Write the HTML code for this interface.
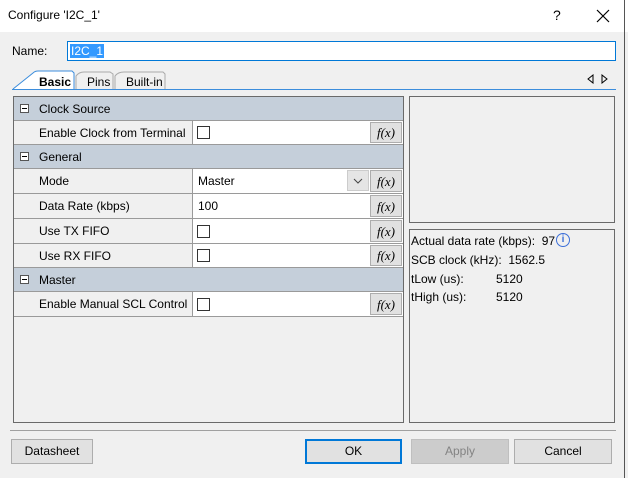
<!DOCTYPE html>
<html><head><meta charset="utf-8"><style>
*{box-sizing:border-box;margin:0;padding:0}
body{width:628px;height:478px;overflow:hidden;background:#f0f0f0;font-family:"Liberation Sans",sans-serif;font-size:12px;color:#000;position:relative}
.a{position:absolute}
.hdr{background:#c5cfda}
.lbl{position:absolute;left:25px;line-height:24px;font-size:12px}
.val{position:absolute;left:178px;right:0;background:#fff;border-left:1px solid #9a9a9a}
.cb{position:absolute;width:13px;height:13px;border:1px solid #333;background:#fff}
.fx{position:absolute;right:1px;width:32px;background:#e1e1e1;border:1px solid #adadad;font-style:italic;text-align:center;font-family:"Liberation Serif",serif;font-size:13px}
.line{position:absolute;left:0;right:0;height:1px;background:#9a9a9a}
.pm{position:absolute;left:6px;width:9px;height:9px;border:1px solid #555;background:#fff}
.pm:after{content:"";position:absolute;left:1px;top:3px;width:5px;height:1px;background:#000}
.btn{position:absolute;top:439px;height:25px;border:1px solid #adadad;background:#e1e1e1;text-align:center;line-height:23px}
</style></head><body>
<div class="a" style="left:0;top:0;width:628px;height:32px;background:#fff"></div>
<div class="a" style="left:8px;top:8px;font-size:12px">Configure 'I2C_1'</div>
<div class="a" style="left:553px;top:7px;font-size:14px">?</div>
<svg class="a" style="left:596px;top:9px" width="14" height="14"><path d="M1 1L13 13M13 1L1 13" stroke="#000" stroke-width="1.2"/></svg>
<div class="a" style="left:624px;top:0;width:1px;height:478px;background:#555"></div>

<div class="a" style="left:12px;top:44px">Name:</div>
<div class="a" style="left:67px;top:41px;width:549px;height:20px;border:1px solid #0078d7;background:#fff"></div>
<div class="a" style="left:70px;top:44px;height:14px;background:#3399ff;color:#fff;padding:0 1px;line-height:14px">I2C_1</div>

<svg class="a" style="left:12px;top:70px" width="160" height="21">
<path d="M103 19 L103 6 Q106 2 112 2 L151 2 L153 4 L153 19" fill="#f0f0f0" stroke="#aaa"/>
<path d="M64 19 L64 6 Q67 2 72 2 L98 2 L101 4 L101 19" fill="#f0f0f0" stroke="#aaa"/>
<path d="M1 19 L21 3 Q23 1 26 1 L60 1 L62 3 L62 19" fill="#fff" stroke="#3c8ddc"/>
</svg>
<div class="a" style="left:39px;top:75px;font-weight:bold">Basic</div>
<div class="a" style="left:87px;top:75px">Pins</div>
<div class="a" style="left:126px;top:75px">Built-in</div>
<div class="a" style="left:12px;top:89px;width:604px;height:1px;background:#3c8ddc"></div>
<svg class="a" style="left:587px;top:74px" width="22" height="10"><path d="M6 1L1 5L6 9Z M15 1L20 5L15 9Z" fill="none" stroke="#000"/></svg>

<div class="a" style="left:13px;top:96px;width:391px;height:327px;border:1px solid #6a6a6a;background:#f0f0f0">
 <div class="a hdr" style="left:0;right:0;top:0;height:24px"></div><div class="pm" style="top:7px"></div><div class="lbl" style="top:0">Clock Source</div>
 <div class="line" style="top:23px"></div>
 <div class="lbl" style="top:24px">Enable Clock from Terminal</div>
 <div class="val" style="top:24px;height:23px"><div class="cb" style="left:4px;top:5px"></div><div class="fx" style="top:1px;height:21px;line-height:20px">f(x)</div></div>
 <div class="line" style="top:47px"></div>
 <div class="a hdr" style="left:0;right:0;top:48px;height:23px"></div><div class="pm" style="top:55px"></div><div class="lbl" style="top:48px">General</div>
 <div class="line" style="top:71px"></div>
 <div class="lbl" style="top:72px">Mode</div>
 <div class="val" style="top:72px;height:24px"><div class="a" style="left:5px;top:5px">Master</div><div class="a" style="right:34px;top:1px;width:22px;height:21px;background:#e5e5e5;border:1px solid #ccc"><svg width="20" height="19"><path d="M6 8L10 12L14 8" fill="none" stroke="#444"/></svg></div><div class="fx" style="top:1px;height:22px;line-height:21px">f(x)</div></div>
 <div class="line" style="top:96px"></div>
 <div class="lbl" style="top:97px">Data Rate (kbps)</div>
 <div class="val" style="top:97px;height:24px"><div class="a" style="left:5px;top:5px">100</div><div class="fx" style="top:1px;height:22px;line-height:21px">f(x)</div></div>
 <div class="line" style="top:121px"></div>
 <div class="lbl" style="top:122px">Use TX FIFO</div>
 <div class="val" style="top:122px;height:24px"><div class="cb" style="left:4px;top:6px"></div><div class="fx" style="top:1px;height:22px;line-height:21px">f(x)</div></div>
 <div class="line" style="top:146px"></div>
 <div class="lbl" style="top:147px">Use RX FIFO</div>
 <div class="val" style="top:147px;height:23px"><div class="cb" style="left:4px;top:5px"></div><div class="fx" style="top:1px;height:21px;line-height:20px">f(x)</div></div>
 <div class="line" style="top:170px"></div>
 <div class="a hdr" style="left:0;right:0;top:171px;height:23px"></div><div class="pm" style="top:178px"></div><div class="lbl" style="top:171px">Master</div>
 <div class="line" style="top:194px"></div>
 <div class="lbl" style="top:195px">Enable Manual SCL Control</div>
 <div class="val" style="top:195px;height:24px"><div class="cb" style="left:4px;top:6px"></div><div class="fx" style="top:1px;height:22px;line-height:21px">f(x)</div></div>
 <div class="line" style="top:219px"></div>
</div>

<div class="a" style="left:409px;top:96px;width:206px;height:127px;border:1px solid #6a6a6a"></div>
<div class="a" style="left:409px;top:229px;width:206px;height:194px;border:1px solid #6a6a6a"></div>
<div class="a" style="left:411px;top:234px">Actual data rate (kbps): &nbsp;97</div>
<div class="a" style="left:556px;top:233px;width:14px;height:14px;border:1px solid #3c6fd8;border-radius:50%;color:#3c6fd8;font-size:10px;font-weight:bold;text-align:center;line-height:12px">i</div>
<div class="a" style="left:411px;top:253px">SCB clock (kHz): &nbsp;1562.5</div>
<div class="a" style="left:411px;top:272px">tLow (us):</div><div class="a" style="left:496px;top:272px">5120</div>
<div class="a" style="left:411px;top:290px">tHigh (us):</div><div class="a" style="left:496px;top:290px">5120</div>

<div class="a" style="left:10px;top:430px;width:606px;height:1px;background:#a0a0a0"></div>
<div class="btn" style="left:11px;width:82px">Datasheet</div>
<div class="btn" style="left:305px;width:97px;border:2px solid #0078d7;line-height:21px">OK</div>
<div class="btn" style="left:411px;width:98px;background:#cccccc;border-color:#bfbfbf;color:#838383">Apply</div>
<div class="btn" style="left:514px;width:98px">Cancel</div>
</body></html>
